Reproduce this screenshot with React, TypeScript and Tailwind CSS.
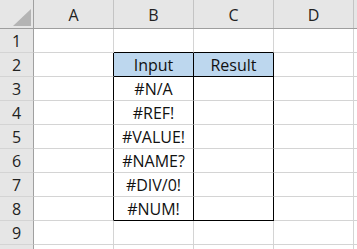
const cols = ["A", "B", "C", "D", ""];
const colW = ["w-[80px]", "w-[80px]", "w-[80px]", "w-[80px]", "w-[80px]"];

const data: Record<number, [string, string]> = {
  2: ["Input", "Result"],
  3: ["#N/A", ""],
  4: ["#REF!", ""],
  5: ["#VALUE!", ""],
  6: ["#NAME?", ""],
  7: ["#DIV/0!", ""],
  8: ["#NUM!", ""],
};

function Cell({ row, col }: { row: number; col: number }) {
  // table box spans B2:C8
  const inBox = row >= 2 && row <= 8;
  const blackRight = inBox && (col === 0 || col === 1 || col === 2);
  const blackBottom =
    (row === 1 && (col === 1 || col === 2)) ||
    (row === 2 && (col === 1 || col === 2)) ||
    (row === 8 && (col === 1 || col === 2));
  const fill = row === 2 && (col === 1 || col === 2);
  const text = data[row] && (col === 1 || col === 2) ? data[row][col - 1] : "";
  return (
    <div
      className={`${colW[col]} shrink-0 h-[24px] border-r border-b flex items-center justify-center pt-[1px] text-[16px] text-[#111] ${
        blackRight ? "border-r-black" : "border-r-[#d4d4d4]"
      } ${blackBottom ? "border-b-black" : "border-b-[#d4d4d4]"} ${fill ? "bg-[#bdd7ee]" : "bg-white"}`}
    >
      {text}
    </div>
  );
}

export default function App() {
  return (
    <div
      className="w-[357px] h-[249px] overflow-hidden bg-white"
      style={{ fontFamily: "'Open Sans', 'Liberation Sans', sans-serif" }}
    >
      {/* Column headers */}
      <div className="flex h-[29px] bg-[#e6e6e6] border-b border-b-[#9e9e9e]">
        <div className="w-[34px] shrink-0 h-full border-r border-r-[#a0a0a0] relative">
          <svg className="absolute left-[13px] top-[9px]" width="18" height="17" viewBox="0 0 18 17">
            <polygon points="18,0 18,17 0,17" fill="#b4b4b4" />
          </svg>
        </div>
        {cols.map((c, i) => (
          <div
            key={i}
            className={`${colW[i]} shrink-0 h-full border-r border-r-[#c4c4c4] flex items-center justify-center pt-[1px] text-[16px] text-[#222]`}
          >
            {c}
          </div>
        ))}
      </div>

      {/* Rows */}
      {[1, 2, 3, 4, 5, 6, 7, 8, 9, 10].map((r) => (
        <div key={r} className="flex">
          <div className="w-[34px] shrink-0 h-[24px] bg-[#e6e6e6] border-r border-r-[#a0a0a0] border-b border-b-[#d4d4d4] flex items-center justify-center pt-[1px] text-[16px] text-[#222]">
            {r < 10 ? r : ""}
          </div>
          {cols.map((c, i) => (
            <Cell key={i} row={r} col={i} />
          ))}
        </div>
      ))}
    </div>
  );
}
